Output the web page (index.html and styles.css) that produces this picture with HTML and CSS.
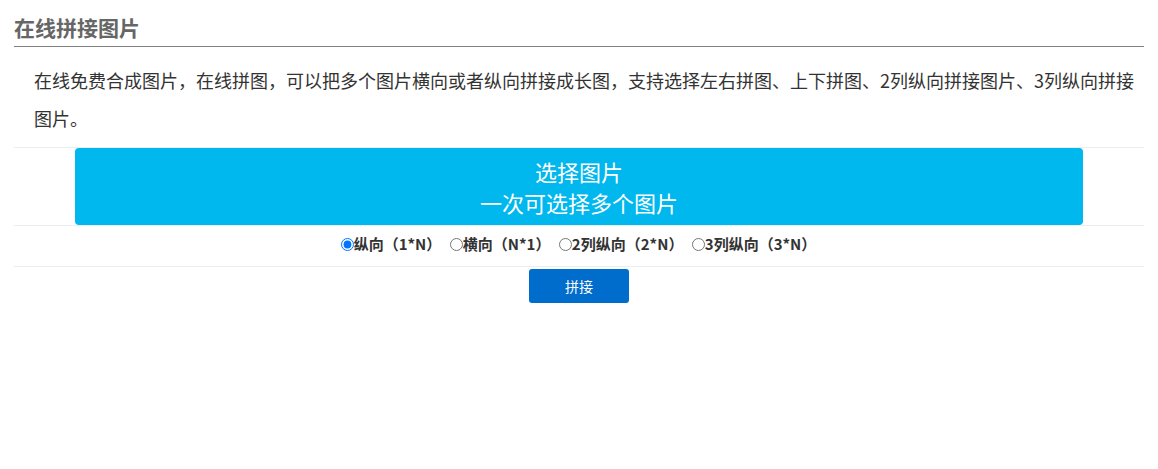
FILE: index.html
```html
<!DOCTYPE html>
<html lang="zh-CN">
<head>
<meta charset="utf-8">
<title>在线拼接图片</title>
<link rel="stylesheet" href="styles.css">
</head>
<body>
<div class="page">
  <h1 class="title">在线拼接图片</h1>
  <p class="intro">在线免费合成图片，在线拼图，可以把多个图片横向或者纵向拼接成长图，支持选择左右拼图、上下拼图、2列纵向拼接图片、3列纵向拼接图片。</p>
  <div class="rows">
    <div class="row row-pick">
      <div class="pick">选择图片<br>一次可选择多个图片</div>
    </div>
    <div class="row row-opts">
      <label class="opt"><input type="radio" name="mode" checked>纵向（1*N）</label>
      <label class="opt"><input type="radio" name="mode">横向（N*1）</label>
      <label class="opt"><input type="radio" name="mode">2列纵向（2*N）</label>
      <label class="opt"><input type="radio" name="mode">3列纵向（3*N）</label>
    </div>
    <div class="row row-go">
      <button class="go" type="button">拼接</button>
    </div>
  </div>
</div>
</body>
</html>
```
FILE: styles.css
```css
* { box-sizing: border-box; }
body {
  margin: 0;
  background: #fff;
  font-family: "Noto Sans CJK SC", "Noto Sans", sans-serif;
  color: #333;
}
.page {
  margin: 0 14px;
  padding-top: 12px;
}
.title {
  margin: 0;
  font-size: 21px;
  line-height: 30px;
  font-weight: bold;
  color: #666;
  padding-bottom: 4px;
  border-bottom: 1px solid #808080;
}
.intro {
  margin: 0;
  padding: 14px 0 10px 20px;
  font-size: 18px;
  line-height: 38px;
  color: #333;
}
.row {
  border-top: 1px solid #e8eef2;
  text-align: center;
}
.row-pick {
  display: flex;
  justify-content: center;
}
.pick {
  width: 1008px;
  height: 77px;
  padding-top: 8px;
  background: #00b7ee;
  color: #fff;
  font-size: 22px;
  line-height: 31px;
  border-radius: 4px;
  cursor: pointer;
}
.row-opts {
  height: 41px;
  padding-top: 7px;
  padding-right: 6px;
  font-size: 15px;
  line-height: 22px;
  font-weight: bold;
  color: #333;
}
.opt input {
  margin: 0 0 0 5px;
  width: 13px;
  height: 13px;
  vertical-align: -1px;
}
.row-go {
  padding-top: 2px;
}
.go {
  width: 100px;
  height: 34px;
  border: 0;
  border-radius: 3px;
  background: #006dcc;
  color: #fff;
  font-family: inherit;
  font-size: 14px;
  font-weight: normal;
  cursor: pointer;
}
```
